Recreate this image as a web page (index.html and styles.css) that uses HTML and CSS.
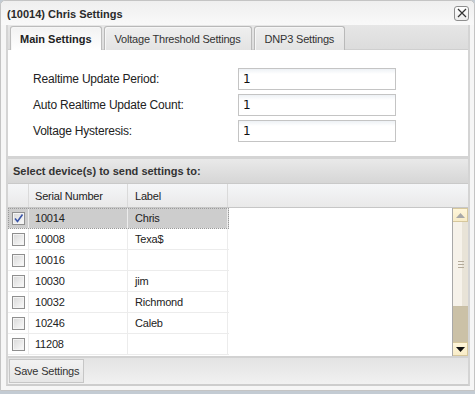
FILE: index.html
```html
<!DOCTYPE html>
<html>
<head>
<meta charset="utf-8">
<link rel="stylesheet" href="styles.css">
</head>
<body>
<div class="dialog">
  <div class="titlebar">
    <span class="title">(10014) Chris Settings</span>
    <span class="close"><svg width="10" height="10" viewBox="0 0 10 10"><path d="M1 1 L9 9 M9 1 L1 9" stroke="#333" stroke-width="1.2" fill="none"/></svg></span>
  </div>
  <div class="frame">
    <div class="tabbar">
      <div class="tab active">Main Settings</div>
      <div class="tab">Voltage Threshold Settings</div>
      <div class="tab">DNP3 Settings</div>
    </div>
    <div class="panel">
      <div class="field"><span class="label">Realtime Update Period:</span><span class="input">1</span></div>
      <div class="field"><span class="label">Auto Realtime Update Count:</span><span class="input">1</span></div>
      <div class="field"><span class="label">Voltage Hysteresis:</span><span class="input">1</span></div>
    </div>
    <div class="grid-title">Select device(s) to send settings to:</div>
    <div class="grid-head">
      <div class="hc c-chk"></div>
      <div class="hc c-sn">Serial Number</div>
      <div class="hc c-lb">Label</div>
      <div class="hc c-fill"></div>
    </div>
    <div class="grid-body">
      <div class="rows">
        <div class="row selected"><div class="c c-chk"><span class="cb checked"><svg width="11" height="11" viewBox="0 0 11 11"><path d="M2 5.5 L4.5 8.5 L9.5 1.5" stroke="#3a55a8" stroke-width="1.6" fill="none"/></svg></span></div><div class="c c-sn">10014</div><div class="c c-lb">Chris</div></div>
        <div class="row"><div class="c c-chk"><span class="cb"></span></div><div class="c c-sn">10008</div><div class="c c-lb">Texa$</div></div>
        <div class="row"><div class="c c-chk"><span class="cb"></span></div><div class="c c-sn">10016</div><div class="c c-lb"></div></div>
        <div class="row"><div class="c c-chk"><span class="cb"></span></div><div class="c c-sn">10030</div><div class="c c-lb">jim</div></div>
        <div class="row"><div class="c c-chk"><span class="cb"></span></div><div class="c c-sn">10032</div><div class="c c-lb">Richmond</div></div>
        <div class="row"><div class="c c-chk"><span class="cb"></span></div><div class="c c-sn">10246</div><div class="c c-lb">Caleb</div></div>
        <div class="row"><div class="c c-chk"><span class="cb"></span></div><div class="c c-sn">11208</div><div class="c c-lb"></div></div>
      </div>
      <div class="scrollbar">
        <div class="sb-btn up"><svg width="9" height="5" viewBox="0 0 9 5"><path d="M0 5 L4.5 0 L9 5 Z" fill="#a8a8a8"/></svg></div>
        <div class="sb-thumb"><span class="grip"></span></div>
        <div class="sb-track"></div>
        <div class="sb-btn down"><svg width="9" height="5" viewBox="0 0 9 5"><path d="M0 0 L9 0 L4.5 5 Z" fill="#111"/></svg></div>
      </div>
    </div>
    <div class="footer"><span class="btn">Save Settings</span></div>
  </div>
</div>
</body>
</html>
```
FILE: styles.css
```css
html, body {
  margin: 0;
  padding: 0;
}
body {
  background: #c3cbd3;
  width: 475px;
  height: 394px;
  overflow: hidden;
  font-family: "Liberation Sans", Arial, sans-serif;
  font-size: 11px;
  color: #222;
}
.dialog {
  box-sizing: border-box;
  width: 475px;
  height: 391px;
  background: #f6f6f6;
  border: 1px solid #c4c4c4;
  border-radius: 5px 5px 0 0;
  padding: 0 4px 4px 5px;
  display: flex;
  flex-direction: column;
}
.titlebar {
  height: 24px;
  margin: 0 -4px 0 -5px;
  padding: 0 0 0 6px;
  display: flex;
  align-items: center;
  justify-content: space-between;
  background: linear-gradient(#efefef, #f9f9f9);
  border-radius: 5px 5px 0 0;
}
.title {
  font-weight: bold;
  font-size: 11px;
  color: #2a2a2a;
  padding-top: 1px;
}
.close {
  box-sizing: border-box;
  width: 15px;
  height: 15px;
  margin-right: 5px;
  border: 1px solid #8e8e8e;
  border-radius: 3px;
  background: linear-gradient(#ffffff, #ececec);
  display: flex;
  align-items: center;
  justify-content: center;
}
.frame {
  flex: 1;
  display: flex;
  flex-direction: column;
  border-left: 2px solid #d4d4d4;
  border-right: 2px solid #d4d4d4;
  border-bottom: 2px solid #cdcdcd;
  background: #fff;
}
.tabbar {
  height: 25px;
  box-sizing: border-box;
  padding: 2px 0 0 2px;
  display: flex;
  align-items: flex-end;
  gap: 2px;
  background: linear-gradient(#e6e6e6, #dcdcdc);
  border-bottom: 1px solid #cfcfcf;
}
.tab {
  box-sizing: border-box;
  height: 24px;
  padding: 0 10px;
  display: flex;
  align-items: center;
  border: 1px solid #b9b9b9;
  border-bottom: none;
  border-radius: 3px 3px 0 0;
  box-shadow: inset 1px 1px 0 #f6f6f6;
  background: linear-gradient(#efefef, #e3e3e3);
  color: #333;
  font-size: 11px;
  letter-spacing: -0.2px;
  margin-bottom: -1px;
}
.tab.active {
  font-weight: bold;
  letter-spacing: 0;
  padding: 0 9px;
  color: #222;
  background: linear-gradient(#f2f2f2, #ffffff);
  border-color: #bcbcbc;
}
.panel {
  height: 109px;
  box-sizing: border-box;
  padding: 18px 0 0 25px;
  display: flex;
  flex-direction: column;
  gap: 4px;
  background: #fff;
  border-bottom: 3px solid #d4d4d4;
}
.field {
  display: flex;
  align-items: center;
  height: 22px;
}
.label {
  width: 205px;
  font-size: 12px;
  letter-spacing: -0.2px;
  color: #222;
}
.input {
  box-sizing: border-box;
  width: 158px;
  height: 22px;
  border: 1px solid #c4c4c4;
  background: linear-gradient(#edf1f5, #ffffff 5px);
  padding-left: 4px;
  display: flex;
  align-items: center;
  font-family: "DejaVu Sans", Verdana, sans-serif;
  font-size: 12px;
  color: #111;
}
.grid-title {
  height: 25px;
  box-sizing: border-box;
  padding-left: 5px;
  display: flex;
  align-items: center;
  font-weight: bold;
  font-size: 11px;
  color: #333;
  background: linear-gradient(#e9e9e9, #d6d6d6);
  border-bottom: 1px solid #c9c9c9;
}
.grid-head {
  height: 24px;
  box-sizing: border-box;
  display: flex;
  background: linear-gradient(#f5f6f8, #e9e9e9);
  border-bottom: 1px solid #c6c6c6;
}
.hc {
  box-sizing: border-box;
  height: 100%;
  display: flex;
  align-items: center;
  border-right: 1px solid #dadada;
  color: #222;
  letter-spacing: -0.2px;
}
.c-chk { width: 21px; justify-content: center; }
.c-sn { width: 99px; padding-left: 6px; }
.c-lb { width: 100px; padding-left: 7px; }
.c-fill { flex: 1; border-right: none; }
.grid-body {
  height: 148px;
  display: flex;
  background: #fff;
}
.rows {
  flex: 1;
}
.row {
  display: flex;
  height: 21px;
  box-sizing: border-box;
  border-bottom: 1px solid #ececec;
  width: 221px;
  letter-spacing: -0.2px;
}
.row.selected {
  background: #cdcdcd;
  outline: 1px dotted #9a9a9a;
  outline-offset: -1px;
}
.c {
  box-sizing: border-box;
  height: 100%;
  display: flex;
  align-items: center;
  border-right: 1px solid #ececec;
}
.cb {
  box-sizing: border-box;
  width: 13px;
  height: 13px;
  border: 1px solid #8f8f8f;
  background: linear-gradient(135deg, #d8d8d8, #fbfbfb);
  box-shadow: inset 0 0 0 1px #f4f4f4;
  display: flex;
  align-items: center;
  justify-content: center;
}
.scrollbar {
  box-sizing: border-box;
  width: 16px;
  display: flex;
  flex-direction: column;
  border-left: 1px solid #a9a9a9;
}
.sb-btn {
  height: 14px;
  box-sizing: border-box;
  background: linear-gradient(#fff6da, #f8ecc8);
  border: 1px solid #d6c79c;
  border-left: none;
  display: flex;
  align-items: center;
  justify-content: center;
}
.sb-thumb {
  height: 84px;
  background: linear-gradient(90deg, #f6f2ea 60%, #e8e3d7 60%);
  border-bottom: 1px solid #c9bfa5;
  display: flex;
  align-items: center;
  justify-content: center;
}
.grip {
  width: 6px;
  height: 7px;
  background: repeating-linear-gradient(#b4ab9a 0 1px, transparent 1px 3px);
}
.sb-track {
  flex: 1;
  background: #cbc1a7;
}
.footer {
  flex: 1;
  display: flex;
  align-items: center;
  padding-left: 1px;
  background: linear-gradient(#e3e3e3, #f1f1f1);
  border-top: 2px solid #d2d2d2;
}
.btn {
  box-sizing: border-box;
  height: 24px;
  padding: 0 4px;
  display: flex;
  align-items: center;
  border: 1px solid #c6c6c6;
  background: linear-gradient(#f2f2f2, #e6e6e6);
  color: #333;
  font-size: 11px;
  letter-spacing: -0.2px;
}
```
